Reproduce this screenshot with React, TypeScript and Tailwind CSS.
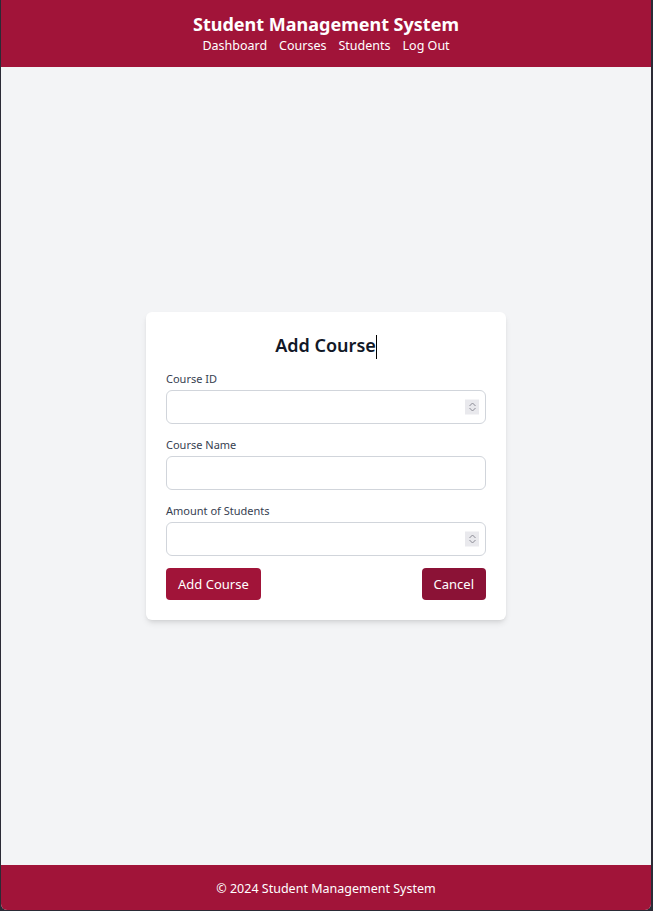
import { useState } from "react";

const fields = [
  { id: "courseId", label: "Course ID", spinner: true },
  { id: "courseName", label: "Course Name", spinner: false },
  { id: "amount", label: "Amount of Students", spinner: true },
];

function Spinner() {
  return (
    <div className="absolute right-[7px] top-1/2 -translate-y-1/2 w-[14px] h-[15px] bg-[#e9e9ed] flex flex-col items-center justify-center gap-[1px]">
      <svg width="7" height="4" viewBox="0 0 7 4" fill="none" stroke="#8a8a94" strokeWidth="1">
        <path d="M0.5 3.5 L3.5 0.5 L6.5 3.5" />
      </svg>
      <svg width="7" height="4" viewBox="0 0 7 4" fill="none" stroke="#8a8a94" strokeWidth="1">
        <path d="M0.5 0.5 L3.5 3.5 L6.5 0.5" />
      </svg>
    </div>
  );
}

export default function App() {
  const [values, setValues] = useState<Record<string, string>>({});

  return (
    <div
      className="min-h-screen flex flex-col bg-[#2b2b36] pl-px pr-[2px] pb-px"
      style={{ fontFamily: '"Noto Sans", "Open Sans", sans-serif' }}
    >
      <div className="flex-1 flex flex-col bg-[#f3f4f6] rounded-b-md overflow-hidden">
        <header className="bg-[#a11439] text-white text-center pt-[12px] pb-[11px]">
          <h1 className="text-[18px] font-bold leading-[24px]">Student Management System</h1>
          <nav className="flex justify-center gap-[12px] text-[12.5px] leading-[20px]">
            <a href="#">Dashboard</a>
            <a href="#">Courses</a>
            <a href="#">Students</a>
            <a href="#">Log Out</a>
          </nav>
        </header>

        <main className="flex-1 flex items-center justify-center">
          <div className="w-[360px] bg-white rounded-md shadow-md p-5">
            <h2 className="text-[18px] font-semibold leading-[26px] text-[#111827] text-center mb-[12px]">
              Add Course<span className="inline-block w-px h-[24px] bg-black align-middle -mt-[2px]" />
            </h2>
            <div className="flex flex-col gap-[13px]">
              {fields.map((f) => (
                <div key={f.id}>
                  <label htmlFor={f.id} className="block text-[11px] leading-[16px] text-[#374151] mb-[3px]">
                    {f.label}
                  </label>
                  <div className="relative">
                    <input
                      id={f.id}
                      type="text"
                      value={values[f.id] ?? ""}
                      onChange={(e) => setValues({ ...values, [f.id]: e.target.value })}
                      className="w-full h-[34px] border border-[#d1d5db] rounded-md px-3 text-sm outline-none bg-white"
                    />
                    {f.spinner && <Spinner />}
                  </div>
                </div>
              ))}
            </div>
            <div className="flex justify-between mt-3">
              <button className="h-8 px-3 pt-[3px] rounded bg-[#a11439] text-white text-[13px]">Add Course</button>
              <button className="h-8 px-3 pt-[3px] rounded bg-[#8b1236] text-white text-[13px]">Cancel</button>
            </div>
          </div>
        </main>

        <footer className="bg-[#a11439] text-white text-center text-[12.5px] h-[45px] pt-[3px] flex items-center justify-center">
          © 2024 Student Management System
        </footer>
      </div>
    </div>
  );
}
